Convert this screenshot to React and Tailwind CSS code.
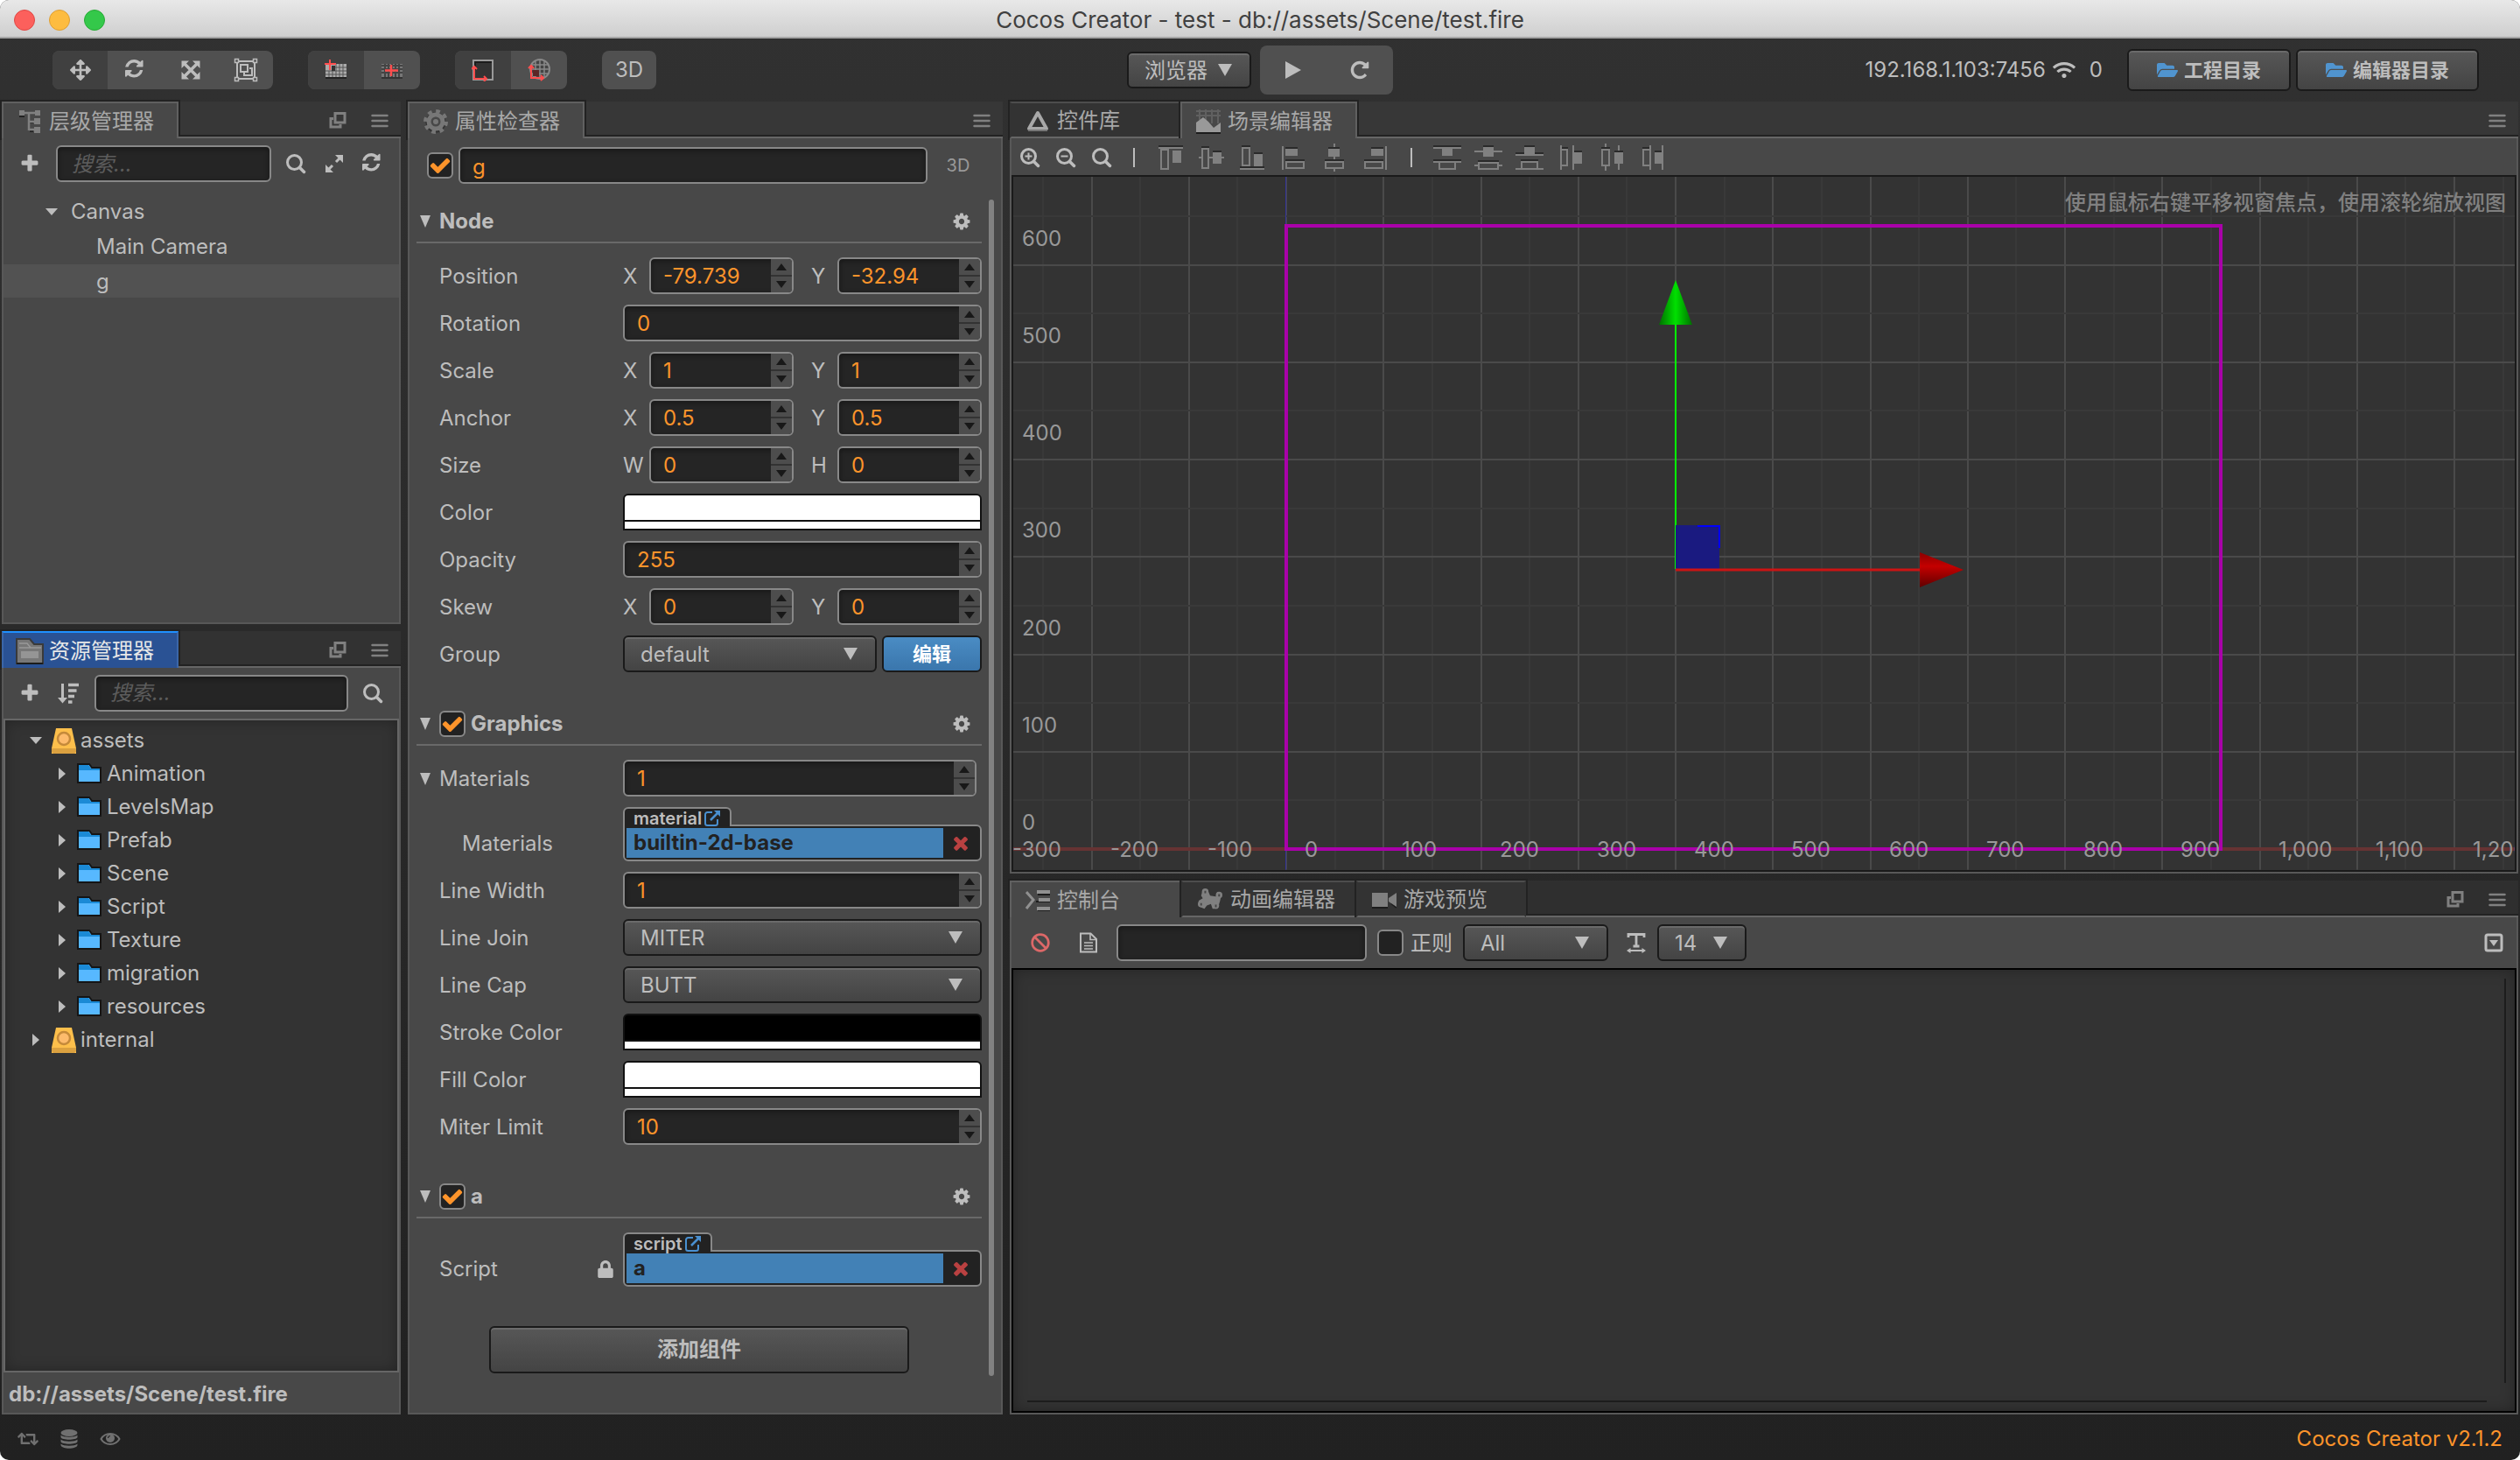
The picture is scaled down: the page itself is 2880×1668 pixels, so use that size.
import React, { useState } from 'react';
import { FaArrowsAlt, FaFolderOpen, FaLock, FaRetweet, FaWifi, FaBan } from 'react-icons/fa';
import clsx from 'clsx';

const paths = {
  refresh:
    'M1511 928q0 5-1 7-64 268-268 434.5t-478 166.5q-146 0-282.5-55t-243.5-157l-129 129q-19 19-45 19t-45-19-19-45v-448q0-26 19-45t45-19h448q26 0 45 19t19 45-19 45l-137 137q71 66 161 102t187 36q134 0 250-65t186-179q11-17 53-117 8-23 30-23h192q13 0 22.5 9.5t9.5 22.5zm25-800v448q0 26-19 45t-45 19h-448q-26 0-45-19t-19-45 19-45l138-138q-148-137-349-137-134 0-250 65t-186 179q-11 17-53 117-8 23-30 23h-199q-13 0-22.5-9.5t-9.5-22.5v-7q65-268 270-434.5t480-166.5q146 0 284 55.5t245 156.5l130-129q19-19 45-19t45 19 19 45z',
  repeat:
    'M1664 256v448q0 26-19 45t-45 19h-448q-42 0-59-40-17-39 14-69l138-138q-148-137-349-137-104 0-198.5 40.5t-163.5 109.5-109.5 163.5-40.5 198.5 40.5 198.5 109.5 163.5 163.5 109.5 198.5 40.5q119 0 225-52t179-147q7-10 23-12 15 0 25 9l137 138q9 8 9.5 20.5t-7.5 22.5q-109 132-264 204.5t-327 72.5q-156 0-298-61t-245-164-164-245-61-298 61-298 164-245 245-164 298-61q147 0 284.5 55.5t244.5 156.5l130-129q29-31 70-14 39 17 39 59z',
  plus:
    'M1600 736v192q0 40-28 68t-68 28h-416v416q0 40-28 68t-68 28h-192q-40 0-68-28t-28-68v-416h-416q-40 0-68-28t-28-68v-192q0-40 28-68t68-28h416v-416q0-40 28-68t68-28h192q40 0 68 28t28 68v416h416q40 0 68 28t28 68z',
  check:
    'M1671 566q0 40-28 68l-724 724-136 136q-28 28-68 28t-68-28l-136-136-362-362q-28-28-28-68t28-68l136-136q28-28 68-28t68 28l294 295 656-657q28-28 68-28t68 28l136 136q28 28 28 68z',
  times:
    'M1490 1322q0 40-28 68l-136 136q-28 28-68 28t-68-28l-294-294-294 294q-28 28-68 28t-68-28l-136-136q-28-28-28-68t28-68l294-294-294-294q-28-28-28-68t28-68l136-136q28-28 68-28t68 28l294 294 294-294q28-28 68-28t68 28l136 136q28 28 28 68t-28 68l-294 294 294 294q28 28 28 68z',
  cog:
    'M1152 896q0-106-75-181t-181-75-181 75-75 181 75 181 181 75 181-75 75-181zm512-109v222q0 12-8 23t-20 13l-185 28q-19 54-39 91 35 50 107 138 10 12 10 25t-9 23q-27 37-99 108t-94 71q-12 0-26-9l-138-108q-44 23-91 38-16 136-29 186-7 28-36 28h-222q-14 0-24.5-8.5t-11.5-21.5l-28-184q-49-16-90-37l-141 107q-10 9-25 9-14 0-25-11-126-114-165-168-7-10-7-23 0-12 8-23 15-21 51-66.5t54-70.5q-27-50-41-99l-183-27q-13-2-21-12.5t-8-23.5v-222q0-12 8-23t19-13l186-28q14-46 39-92-40-57-107-138-10-12-10-24 0-10 9-23 26-36 98.5-107.5t94.5-71.5q13 0 26 10l138 107q44-23 91-38 16-136 29-186 7-28 36-28h222q14 0 24.5 8.5t11.5 21.5l28 184q49 16 90 37l142-107q9-9 24-9 13 0 25 10 129 119 165 170 7 8 7 22 0 12-8 23-15 21-51 66.5t-54 70.5q26 50 41 98l183 28q13 2 21 12.5t8 23.5z',
};

const Glyph = ({ name, className }) => (
  <svg viewBox="0 0 1792 1792" fill="currentColor" className={className} aria-hidden="true">
    <path d={paths[name]} />
  </svg>
);

const Svg = ({ size = 24, className = 'w-6 h-6', children }) => (
  <svg viewBox={`0 0 ${size} ${size}`} fill="none" className={clsx('shrink-0', className)} aria-hidden="true">
    {children}
  </svg>
);

/* ---------- drawn icons ---------- */

const SearchIcon = ({ sign }) => (
  <Svg>
    <circle cx="10.5" cy="10.5" r="8" stroke="currentColor" strokeWidth="3" />
    <path d="M16.5 16.5 21.5 21.5" stroke="currentColor" strokeWidth="3.5" strokeLinecap="round" />
    {sign && <path d={sign === '+' ? 'M10.500 6.500v8M6.500 10.500h8' : 'M6.500 10.500h8'} stroke="currentColor" strokeWidth="2" />}
  </Svg>
);

const ExpandIcon = () => (
  <Svg>
    <path d="M14 10 20 4M4 20l6-6" stroke="currentColor" strokeWidth="3" />
    <path d="M13 2h9v9zM11 22H2v-9z" fill="currentColor" />
  </Svg>
);

const SortIcon = () => (
  <Svg>
    <path d="M5.500 1v19" stroke="currentColor" strokeWidth="3" />
    <path d="M0 17h11l-5.500 6.500z" fill="currentColor" />
    <path d="M12 2.500h12M12 9h9.500M12 15.500h7M12 22h4.500" stroke="currentColor" strokeWidth="3.500" />
  </Svg>
);

const RestoreIcon = () => (
  <Svg size={20} className="w-5 h-5">
    <path d="M7 1.500h11V12H7z" stroke="currentColor" strokeWidth="3" />
    <path d="M5 7.500H2V17h11v-3" stroke="currentColor" strokeWidth="3" />
  </Svg>
);

const MenuIcon = () => (
  <Svg size={20} className="w-5 h-5">
    <path d="M1.500 4h17M1.500 10h17M1.500 16h17" stroke="currentColor" strokeWidth="2.500" strokeLinecap="round" />
  </Svg>
);

const ScaleIcon = () => (
  <Svg>
    <path d="M5 5 19 19M19 5 5 19" stroke="currentColor" strokeWidth="3.500" />
    <path d="M1.500 1.500h8.500L1.500 10zM22.500 1.500v8.500L14 1.500zM1.500 22.500V14l8.500 8.500zM22.500 22.500H14l8.500-8.500z" fill="currentColor" />
  </Svg>
);

const RectToolIcon = () => (
  <Svg size={28} className="w-7 h-7">
    <path d="M4 4h20v20H4z" stroke="currentColor" strokeWidth="2" />
    <path d="M8 8h8v8H8z" stroke="currentColor" strokeWidth="2" />
    <path d="M18 12h3v8h-9v-3" stroke="currentColor" strokeWidth="2" />
    <path d="M1.500 1.500h4v4h-4zM22.500 1.500h4v4h-4zM1.500 22.500h4v4h-4zM22.500 22.500h4v4h-4z" fill="#505050" stroke="currentColor" strokeWidth="1.500" />
  </Svg>
);

const AnchorIcon = () => (
  <Svg size={26} className="w-[26px] h-[26px]">
    <rect x="1" y="6" width="24" height="15" fill="#aaa" />
    <path d="M12 10h13M1 14h24M1 18h24M5 14v7M9 14v7M13 6v15M17 6v15M21 6v15" stroke="#555" />
    <rect x="1" y="21" width="24" height="2" fill="#222" />
    <path d="M8 8h4v6H8z" fill="#333" />
    <path d="M6 1v12M0 6h13" stroke="#ff4d4d" strokeWidth="2" />
  </Svg>
);

const CenterIcon = () => (
  <Svg size={26} className="w-[26px] h-[26px]">
    <rect x="1" y="6" width="24" height="15" fill="#777" />
    <path d="M1 8h24M1 12h24M1 16h24M5 6v15M9 6v15M13 6v15M17 6v15M21 6v15" stroke="#444" strokeWidth="2" />
    <rect x="1" y="21" width="24" height="2" fill="#333" />
    <path d="M12 7v13M5 13.500h15" stroke="#ff4d4d" strokeWidth="2.500" />
  </Svg>
);

const LocalIcon = () => (
  <Svg size={26} className="w-[26px] h-[26px]">
    <rect x="2" y="2" width="22" height="22" fill="#333" stroke="#999" strokeWidth="2" />
    <path d="M3 4h20M4 4v9" stroke="#1c1c1c" strokeWidth="2" />
    <path d="M3 10v13h13M0 12l3-3 3 3M14 20l3 3-3 3" stroke="#ff4d4d" strokeWidth="2" />
  </Svg>
);

const GlobeIcon = () => (
  <Svg size={26} className="w-[26px] h-[26px]">
    <circle cx="14" cy="12" r="11" fill="#444" stroke="#888" strokeWidth="2" />
    <path d="M14 1v22M9 2v20M19 2v20M3 12h22M5 7h19M5 17h19" stroke="#888" strokeWidth="1.500" />
    <path d="M6 20v-7h7v7z" fill="#5a2626" />
    <path d="M4 9v13h13M1 11l3-3 3 3M15 19l3 3-3 3" stroke="#ff4d4d" strokeWidth="2" />
  </Svg>
);

const ExternalIcon = () => (
  <Svg size={20} className="w-5 h-5 text-[#4a90d0]">
    <path d="M10 3H4.500A2.500 2.500 0 0 0 2 5.500v10A2.500 2.500 0 0 0 4.500 18h9a2.500 2.500 0 0 0 2.500-2.500V11" stroke="currentColor" strokeWidth="2" />
    <path d="M8 12 16 4" stroke="currentColor" strokeWidth="2.500" />
    <path d="M12 1h7v7z" fill="currentColor" />
  </Svg>
);

const DatabaseIcon = () => (
  <Svg size={22} className="w-[22px] h-[22px]">
    <g fill="currentColor">
      <ellipse cx="11" cy="4" rx="9.500" ry="4" />
      <path d="M1.500 6.500c3 3 16 3 19 0V9c-1 3.600-18 3.600-19 0z" />
      <path d="M1.500 11.500c3 3 16 3 19 0V14c-1 3.600-18 3.600-19 0z" />
      <path d="M1.500 16.500c3 3 16 3 19 0V18c-1 5-18 5-19 0z" />
    </g>
  </Svg>
);

const EyeIcon = () => (
  <Svg>
    <path d="M1.500 12C6 4 18 4 22.500 12 18 20 6 20 1.500 12z" stroke="currentColor" strokeWidth="2" />
    <circle cx="12" cy="11" r="5" fill="currentColor" />
    <path d="M9.500 11a2.500 2.500 0 0 1 2.500-2.500" stroke="#222" strokeWidth="1.200" />
  </Svg>
);

const DocIcon = () => (
  <Svg>
    <path d="M3 1.500h11.500L21 8v14.500H3z" stroke="currentColor" strokeWidth="2" />
    <path d="M14 1.500V8.500h7M7 12h10M7 15.500h10M7 19h10" stroke="currentColor" strokeWidth="1.600" />
  </Svg>
);

const TextWidthIcon = () => (
  <Svg>
    <path d="M3 6V2.500h18V6M12 2.500V16M8.500 16h7" stroke="currentColor" strokeWidth="2.800" />
    <path d="M4 21h16" stroke="currentColor" strokeWidth="2" />
    <path d="M1 21l4.500-3v6zM23 21l-4.500-3v6z" fill="currentColor" />
  </Svg>
);

const CollapseIcon = () => (
  <Svg>
    <rect x="3" y="3" width="18" height="18" rx="2" stroke="currentColor" strokeWidth="3" />
    <path d="M7 9h10l-5 7z" fill="currentColor" />
  </Svg>
);

const TreeTabIcon = () => (
  <Svg size={28} className="w-7 h-7">
    <path d="M2 8h6M14 15h4M14 25h4" stroke="#222" strokeWidth="2" />
    <path d="M2 4h24M13 4v20M13 14h6M13 23h6" stroke="#808080" strokeWidth="2.500" />
    <path d="M2 1h6v6H2zM20 1h6v6h-6zM19 10h7v7h-7zM19 20h7v7h-7z" fill="#808080" />
  </Svg>
);

const FolderTabIcon = () => (
  <Svg size={32} className="w-8 h-8 -mx-0.5">
    <path d="M1 2h15l5 6h10v22H1z" fill="#777" stroke="#3a3a3a" strokeWidth="2" />
    <path d="M4 7h9l4 5h12M4 12h25" stroke="#999" strokeWidth="1.500" />
    <path d="M6 16h20v8H6z" fill="#959595" />
    <path d="M1 30h30" stroke="#1c1c1c" strokeWidth="2" />
  </Svg>
);

const GearTabIcon = () => (
  <Svg size={28} className="w-7 h-7">
    <circle cx="14" cy="15" r="9" stroke="#333" strokeWidth="5" />
    <circle cx="14" cy="14" r="12" stroke="#777" strokeWidth="4" strokeDasharray="4.700 4.700" />
    <circle cx="14" cy="14" r="8" stroke="#777" strokeWidth="5" />
    <circle cx="14" cy="14" r="3" fill="#777" />
  </Svg>
);

const WidgetTabIcon = () => (
  <Svg size={28} className="w-7 h-7">
    <path d="M14 5 24 23H4z" stroke="#a8a8a8" strokeWidth="4" strokeLinejoin="round" />
    <path d="M3 25h22" stroke="#777" strokeWidth="2" />
  </Svg>
);

const SceneTabIcon = () => (
  <Svg size={28} className="w-7 h-7">
    <path d="M0 2h28M0 7h28M4 0v12M11 0v12M18 0v16M25 0v16" stroke="#606060" strokeWidth="2" />
    <path d="M0 15 8 9l6 5 6 7 8-6v11H0z" fill="#999" />
    <path d="M0 27h28" stroke="#1c1c1c" strokeWidth="2" />
  </Svg>
);

const ConsoleTabIcon = () => (
  <Svg size={28} className="w-7 h-7">
    <path d="M14 7h14M12 15h16M14 25h14" stroke="#1c1c1c" strokeWidth="2" />
    <path d="M13 4h15M15 13h13M13 23h15" stroke="#909090" strokeWidth="4" />
    <path d="M1 4l8 9-8 10" stroke="#909090" strokeWidth="3" />
  </Svg>
);

const AnimTabIcon = () => (
  <Svg size={30} className="w-[30px] h-7">
    <path d="M4 10 6 3l6 0 3 7 7 1 2-6 5 3-2 9-3 9-6 0-2-6-5 2-3 4-7-3 0-7 5-3z" fill="#808080" />
    <circle cx="9" cy="5" r="4" fill="#808080" />
    <circle cx="26" cy="9" r="4" fill="#808080" />
    <circle cx="4" cy="20" r="4" fill="#808080" />
    <circle cx="22" cy="22" r="4" fill="#808080" />
    <path d="M9 4v3M26 8v3M4 19v3M22 21v3" stroke="#444" strokeWidth="2" />
  </Svg>
);

const VideoTabIcon = () => (
  <Svg size={28} className="w-7 h-7">
    <path d="M0 23h18M22 18l6 5" stroke="#1c1c1c" strokeWidth="2" />
    <path d="M0 6h18v16H0zM19 12l9-6v16l-9-6z" fill="#808080" />
  </Svg>
);

const DbIcon = () => (
  <Svg size={30} className="w-[30px] h-[30px]">
    <path d="M6 1h18l5 23v6H1v-6z" fill="#fdbf4b" />
    <path d="M1 24h28v4l-2 2H3l-2-2z" fill="#dba140" />
    <circle cx="15" cy="13" r="7" fill="#fdbb6c" stroke="#c58a3a" strokeWidth="2.500" />
  </Svg>
);

const FolderIcon = () => (
  <Svg size={28} className="w-7 h-7">
    <path d="M1 3h13l3 4h10v17H1z" fill="#57b8ff" stroke="#151515" strokeWidth="2" />
    <path d="M2 4h11l3 4h10v2H2z" fill="#1b8ad6" />
  </Svg>
);

const Caret = ({ open, className }) => (
  <Svg size={14} className={clsx('w-3.5 h-3.5', className)}>
    <path d={open ? 'M0 3h14l-7 8z' : 'M3 0l8 7-8 7z'} fill="currentColor" />
  </Svg>
);

const Triangle = ({ className }) => (
  <svg viewBox="0 0 16 14" preserveAspectRatio="none" className={className} aria-hidden="true">
    <path d="M0 0h16L8 14z" fill="currentColor" />
  </svg>
);

/* each entry: light shapes + their dark shadow line, drawn on a 32px grid */
const alignIcons = [
  { name: 'align top', light: 'M3 4h28v2H3zM5 6h10v24H5zm2 2v20h6V8zM19 8h10v14H19z', dark: 'M3 2h28v2H3z' },
  { name: 'align middle', light: 'M2 15h3v2H2zM14 15h4v2h-4zM28 15h3v2h-3zM5 5h9v24H5zm2 2v20h5V7zM18 10h10v13H18z', dark: 'M5 3h9v2H5zM18 8h10v2H18z' },
  { name: 'align bottom', light: 'M2 28h28v2H2zM4 4h10v22H4zm2 2v18h6V6zM18 12h10v14H18z', dark: 'M4 2h10v2H4zM18 10h10v2H18zM2 26h28v2H2z' },
  { name: 'align left', light: 'M3 3h2v27H3zM7 6h14v8H7zM7 20h22v9H7zm2 2v5h18v-5z', dark: 'M7 4h14v2H7zM7 18h22v2H7z' },
  { name: 'align center', light: 'M15 0h2v4h-2zM15 15h2v3h-2zM15 29h2v3h-2zM9 6h13v9H9zM5 20h22v9H5zm2 2v5h18v-5z', dark: 'M9 4h13v2H9zM5 18h22v2H5z' },
  { name: 'align right', light: 'M27 3h2v27h-2zM11 6h14v8H11zM3 20h22v9H3zm2 2v5h18v-5z', dark: 'M11 4h14v2H11zM3 18h22v2H3z' },
];

const distributeIcons = [
  { name: 'distribute top', light: 'M0 4h32v2H0zM10 6h12v8H10zM0 20h32v2H0zM6 22h20v8H6zm2 0v6h16v-6z', dark: 'M0 2h32v2H0zM0 18h32v2H0z' },
  { name: 'distribute middle', light: 'M0 8h10v2H0zM22 8h10v2H22zM10 4h12v11H10zM0 24h4v2H0zM28 24h4v2h-4zM4 21h24v9H4zm2 2v5h20v-5z', dark: 'M10 2h12v2H10zM4 19h24v2H4z' },
  { name: 'distribute bottom', light: 'M0 12h10v2H0zM22 12h10v2H22zM10 4h12v10H10zM0 28h6v2H0zM26 28h6v2h-6zM6 20h20v10H6zm2 2v6h16v-6z', dark: 'M10 2h12v2H10zM0 10h10v2H0zM22 10h10v2H22zM6 18h20v2H6z' },
  { name: 'distribute left', light: 'M4 2h2v28H4zM6 6h7v20H6zm0 2v16h5V8zM18 2h2v28h-2zM20 10h9v13h-9z', dark: 'M6 4h7v2H6zM20 8h9v2h-9z' },
  { name: 'distribute center', light: 'M8 0h2v4H8zM8 26h2v5H8zM4 6h10v20H4zm2 2v16h6V8zM23 2h2v6h-2zM23 23h2v7h-2zM19 10h10v13H19z', dark: 'M4 4h10v2H4zM19 8h10v2H19z' },
  { name: 'distribute right', light: 'M12 2h2v28h-2zM4 6h8v20H4zm2 2v16h6V8zM26 2h2v28h-2zM18 10h8v13h-8z', dark: 'M4 4h8v2H4zM18 8h8v2h-8z' },
];

/* ---------- shared controls ---------- */

const fieldBox =
  'h-[42px] min-w-0 rounded-md border-2 border-[#888] bg-[#252525] shadow-[inset_0_2px_6px_rgba(0,0,0,0.4)]';
const raised =
  'rounded-md border-2 border-[#1a1a1a] bg-linear-to-b from-[#575757] to-[#444] shadow-[inset_0_2px_0_rgba(255,255,255,0.12)]';

const Checkbox = ({ label, checked = true }) => {
  const [on, setOn] = useState(checked);
  return (
    <label className="relative flex w-[30px] h-[30px] shrink-0 items-center justify-center rounded-md border-2 border-[#888] bg-[#222]">
      <input
        type="checkbox"
        aria-label={label}
        checked={on}
        onChange={(e) => setOn(e.target.checked)}
        className="absolute inset-0 appearance-none"
      />
      {on && <Glyph name="check" className="w-[26px] h-[26px] text-[#fd942b]" />}
    </label>
  );
};

const NumberField = ({ id, label, value, className }) => (
  <div className={clsx('flex flex-1 overflow-hidden', fieldBox, className)}>
    <input
      id={id}
      aria-label={label}
      defaultValue={value}
      className="w-0 min-w-0 flex-1 bg-transparent pl-3.5 pt-0.5 text-[#fd942b] outline-none"
    />
    <div className="flex w-6 shrink-0 flex-col bg-[#4d4d4d] text-[#181818]">
      <button aria-label="Increase" className="flex flex-1 items-center justify-center border-b-2 border-[#333]">
        <Triangle className="w-3 h-2 rotate-180" />
      </button>
      <button aria-label="Decrease" className="flex flex-1 items-center justify-center">
        <Triangle className="w-3 h-2" />
      </button>
    </div>
  </div>
);

const Select = ({ id, label, value, className }) => (
  <div className={clsx('relative', className)}>
    <select
      id={id}
      aria-label={label}
      className={clsx('h-[42px] w-full appearance-none pl-[18px] pt-0.5 text-[#bdbdbd] outline-none', raised)}
    >
      <option>{value}</option>
    </select>
    <Triangle className="pointer-events-none absolute right-[22px] top-3.5 w-4 h-3.5 text-[#bdbdbd]" />
  </div>
);

const ColorField = ({ label, color }) => (
  <button
    aria-label={label}
    className="flex h-[42px] flex-1 flex-col overflow-hidden rounded-t-md border-2 border-[#111] bg-[#111]"
  >
    <span className={clsx('mb-0.5 w-full flex-1', color)} />
    <span className="h-2 w-full bg-white" />
  </button>
);

const AssetField = ({ label, type, value }) => (
  <div className="flex min-w-0 flex-1 flex-col items-start">
    <div className="relative -mb-0.5 flex h-[22px] items-center gap-0.5 rounded-t-md border-2 border-b-0 border-[#888] bg-[#222] px-2.5 pt-0.5 text-xl font-semibold leading-none">
      {type}
      <ExternalIcon />
    </div>
    <div className="flex h-[42px] w-full items-center rounded-md rounded-tl-none border-2 border-[#888] bg-[#222] p-0.5">
      <button
        aria-label={label}
        className="h-full flex-1 bg-[#4281b6] px-2 text-left font-bold leading-none text-[#222]"
      >
        {value}
      </button>
      <button aria-label={`Clear ${label}`} className="flex w-10 justify-center">
        <Glyph name="times" className="w-6 h-6 text-[#b94141]" />
      </button>
    </div>
  </div>
);

const Row = ({ label, id, nested, fold, lock, children }) => (
  <div className="flex items-end">
    <div className="flex h-[42px] w-[236px] shrink-0 items-center pt-0.5">
      <span className="flex w-[26px] shrink-0 pl-1">
        {fold && <Triangle className="w-3 h-3.5" />}
      </span>
      <label htmlFor={id} className={clsx('flex-1', nested && 'pl-[26px]')}>
        {label}
      </label>
      {lock && <FaLock className="mr-2.5 text-[20px]" />}
    </div>
    {children}
  </div>
);

const Pair = ({ name, axes = ['X', 'Y'], values }) => (
  <div className="flex min-w-0 flex-1 gap-5">
    {axes.map((axis, i) => (
      <label key={axis} className="flex min-w-0 flex-1 items-center">
        <span className="w-[30px] shrink-0 pt-0.5">{axis}</span>
        <NumberField label={`${name} ${axis}`} value={values[i]} />
      </label>
    ))}
  </div>
);

const Section = ({ title, toggle, children, className }) => (
  <section className={className}>
    <div className="flex h-[50px] items-center border-b-2 border-[#696969] pt-0.5">
      <span className="flex w-[26px] pl-1">
        <Triangle className="w-3 h-3.5" />
      </span>
      {toggle && (
        <div className="mr-1.5">
          <Checkbox label={title} />
        </div>
      )}
      <h2 className="flex-1 font-bold">{title}</h2>
      <button aria-label={`${title} settings`} className="mr-3">
        <Glyph name="cog" className="w-[22px] h-[22px]" />
      </button>
    </div>
    <div className="mt-4 flex flex-col gap-3">{children}</div>
  </section>
);

/* ---------- panel frame with its tabs ---------- */

const tabTone = {
  active: 'border-[#606060] bg-[#484848] text-[#a8a8a8]',
  idle: 'border-[#4d4d4d] bg-[#333] text-[#a8a8a8]',
  focused: 'border-t-[#1e90ff] border-x-[#3b66a8] bg-[#2a5294] text-[#e8e8e8]',
};

const Panel = ({ tabs, strip, detach, className, children }) => (
  <section className={clsx('flex min-h-0 flex-col', className)}>
    <header className={clsx('flex h-[42px] shrink-0', strip)}>
      {tabs.map(({ icon: Icon, title, tone, width }) => (
        <button
          key={title}
          className={clsx(
            'flex items-center gap-2 border-x-2 border-t-2 pl-4 pt-0.5 leading-none outline-2 outline-[#222]',
            width,
            tabTone[tone],
            tone === 'idle' && 'border-b-2 border-x-transparent border-b-[#666]'
          )}
        >
          <Icon />
          {title}
        </button>
      ))}
      <div className="flex flex-1 items-center justify-end gap-7 border-b-2 border-[#666] pr-3.5 pt-1 text-[#808080] shadow-[inset_0_-2px_0_#222]">
        {detach && (
          <button aria-label="Detach panel">
            <RestoreIcon />
          </button>
        )}
        <button aria-label="Panel menu">
          <MenuIcon />
        </button>
      </div>
    </header>
    <div className="flex min-h-0 flex-1 flex-col border-2 border-t-0 border-[#585858] bg-[#484848]">{children}</div>
  </section>
);

const ToolGroup = ({ items, width }) => (
  <div className={clsx('flex h-11 overflow-hidden rounded-lg bg-[#505050]', width)}>
    {items.map(([label, icon], i) => (
      <button
        key={label}
        aria-label={label}
        className={clsx('flex flex-1 items-center justify-center', i === 0 && 'bg-[#404040]')}
      >
        {icon}
      </button>
    ))}
  </div>
);

const TopBar = () => (
  <div className="grid h-[72px] shrink-0 grid-cols-[1fr_auto_1fr] items-center px-[47px]">
    <div className="flex gap-10 pl-[13px]">
      <ToolGroup
        width="w-[252px]"
        items={[
          ['Move', <FaArrowsAlt className="w-6 h-6" />],
          ['Rotate', <Glyph name="refresh" className="w-6 h-6" />],
          ['Scale', <ScaleIcon />],
          ['Rect', <RectToolIcon />],
        ]}
      />
      <ToolGroup
        width="w-32"
        items={[
          ['Anchor', <AnchorIcon />],
          ['Center', <CenterIcon />],
        ]}
      />
      <ToolGroup
        width="w-32"
        items={[
          ['Local', <LocalIcon />],
          ['Global', <GlobeIcon />],
        ]}
      />
      <button className="h-11 w-[62px] rounded-lg bg-[#505050]">3D</button>
    </div>
    <div className="flex items-center gap-2.5">
      <Select label="Preview platform" value="浏览器" className="w-[142px]" />
      <div className="flex h-14 w-[152px] items-center rounded-lg bg-[#505050]">
        <button aria-label="Play" className="flex flex-1 justify-center">
          <Svg size={22} className="w-[22px] h-[22px]">
            <path d="M2 1v20l18-10z" fill="currentColor" />
          </Svg>
        </button>
        <button aria-label="Reload" className="flex flex-1 justify-center">
          <Glyph name="repeat" className="w-6 h-6" />
        </button>
      </div>
    </div>
    <div className="flex items-center justify-end">
      <span>192.168.1.103:7456</span>
      <FaWifi className="ml-2 w-[26px] h-6" />
      <span className="ml-4 mr-7">0</span>
      <div className="flex gap-1.5">
        {['工程目录', '编辑器目录'].map((text) => (
          <button
            key={text}
            className={clsx('flex h-12 items-center gap-[7px] px-8 text-[22px] font-semibold leading-none', raised)}
          >
            <FaFolderOpen className="w-6 h-6 text-[#5094cf]" />
            {text}
          </button>
        ))}
      </div>
    </div>
  </div>
);

const Hierarchy = () => (
  <Panel
    className="flex-[2]"
    strip="bg-[#373737]"
    detach
    tabs={[{ icon: TreeTabIcon, title: '层级管理器', tone: 'active', width: 'w-[202px]' }]}
  >
    <div className="flex items-center px-[18px] pt-2">
      <button aria-label="Add node" className="mr-[18px]">
        <Glyph name="plus" className="w-6 h-6" />
      </button>
      <input
        aria-label="搜索"
        placeholder="搜索..."
        className={clsx('flex-1 px-4 placeholder:italic placeholder:text-[#5c5c5c]', fieldBox)}
      />
      <div className="ml-4 flex gap-5">
        <button aria-label="Search"><SearchIcon /></button>
        <button aria-label="Expand"><ExpandIcon /></button>
        <button aria-label="Refresh"><Glyph name="refresh" className="w-6 h-6" /></button>
      </div>
    </div>
    <ul className="mt-3.5 flex flex-col gap-0.5">
      <li className="flex h-[38px] items-center gap-[15px] pl-12 pt-0.5">
        <Caret open />
        Canvas
      </li>
      <li className="flex h-[38px] items-center pl-[106px] pt-0.5">Main Camera</li>
      <li className="flex h-[38px] items-center bg-[#525252] pl-[106px] pt-0.5">g</li>
    </ul>
  </Panel>
);

const folders = ['Animation', 'LevelsMap', 'Prefab', 'Scene', 'Script', 'Texture', 'migration', 'resources'];

const Assets = () => (
  <Panel
    className="flex-[3]"
    strip="bg-[#323232]"
    detach
    tabs={[{ icon: FolderTabIcon, title: '资源管理器', tone: 'focused', width: 'w-[202px]' }]}
  >
    <div className="flex items-center px-[18px] py-2">
      <button aria-label="Add asset" className="mr-5">
        <Glyph name="plus" className="w-6 h-6" />
      </button>
      <button aria-label="Sort" className="mr-[18px]">
        <SortIcon />
      </button>
      <input
        aria-label="搜索"
        placeholder="搜索..."
        className={clsx('flex-1 px-4 placeholder:italic placeholder:text-[#5c5c5c]', fieldBox)}
      />
      <button aria-label="Search" className="ml-4">
        <SearchIcon />
      </button>
    </div>
    <ul className="flex-1 border-2 border-[#666] bg-[#333] pt-1 shadow-[inset_0_0_16px_rgba(0,0,0,0.3)]">
      <li className="flex h-[38px] items-center pl-7">
        <Caret open className="mr-2.5" />
        <DbIcon />
        <span className="pl-1">assets</span>
      </li>
      {folders.map((name) => (
        <li key={name} className="flex h-[38px] items-center pl-[58px]">
          <Caret className="mr-2.5" />
          <FolderIcon />
          <span className="pl-1.5">{name}</span>
        </li>
      ))}
      <li className="flex h-[38px] items-center pl-7">
        <Caret className="mr-2.5" />
        <DbIcon />
        <span className="pl-1">internal</span>
      </li>
    </ul>
    <p className="flex h-[46px] shrink-0 items-center pl-1.5 pt-1 font-bold">db://assets/Scene/test.fire</p>
  </Panel>
);

const Inspector = () => (
  <Panel
    className="w-[680px] shrink-0"
    strip="bg-[#373737]"
    tabs={[{ icon: GearTabIcon, title: '属性检查器', tone: 'active', width: 'w-[202px]' }]}
  >
    <div className="flex items-center gap-1.5 pb-[18px] pl-5 pt-2.5">
      <Checkbox label="Node active" />
      <input aria-label="Node name" defaultValue="g" className={clsx('flex-1 px-3.5 pt-0.5 text-[#fd942b]', fieldBox)} />
      <button className="mr-5 w-[58px] text-xl text-[#999]">3D</button>
    </div>
    <div className="flex min-h-0 flex-1 gap-2 px-2 pb-[42px]">
      <div className="min-w-0 flex-1">
        <Section title="Node">
          <Row label="Position"><Pair name="Position" values={['-79.739', '-32.94']} /></Row>
          <Row label="Rotation" id="rotation"><NumberField id="rotation" value="0" /></Row>
          <Row label="Scale"><Pair name="Scale" values={['1', '1']} /></Row>
          <Row label="Anchor"><Pair name="Anchor" values={['0.5', '0.5']} /></Row>
          <Row label="Size"><Pair name="Size" axes={['W', 'H']} values={['0', '0']} /></Row>
          <Row label="Color"><ColorField label="Color" color="bg-white" /></Row>
          <Row label="Opacity" id="opacity"><NumberField id="opacity" value="255" /></Row>
          <Row label="Skew"><Pair name="Skew" values={['0', '0']} /></Row>
          <Row label="Group" id="group">
            <Select id="group" value="default" className="flex-1" />
            <button className="ml-1.5 h-[42px] w-[114px] rounded-md border-2 border-[#1a1a1a] bg-linear-to-b from-[#4a8cc4] to-[#3a76ac] text-[22px] font-semibold leading-none text-white">
              编辑
            </button>
          </Row>
        </Section>

        <Section title="Graphics" toggle className="mt-[34px]">
          <Row label="Materials" id="materials" fold>
            <NumberField id="materials" value="1" className="mr-1.5" />
          </Row>
          <Row label="Materials" nested>
            <AssetField label="Material asset" type="material" value="builtin-2d-base" />
          </Row>
          <Row label="Line Width" id="line-width"><NumberField id="line-width" value="1" /></Row>
          <Row label="Line Join" id="line-join"><Select id="line-join" value="MITER" className="flex-1" /></Row>
          <Row label="Line Cap" id="line-cap"><Select id="line-cap" value="BUTT" className="flex-1" /></Row>
          <Row label="Stroke Color"><ColorField label="Stroke Color" color="bg-black" /></Row>
          <Row label="Fill Color"><ColorField label="Fill Color" color="bg-white" /></Row>
          <Row label="Miter Limit" id="miter"><NumberField id="miter" value="10" /></Row>
        </Section>

        <Section title="a" toggle className="mt-[34px]">
          <Row label="Script" lock>
            <AssetField label="Script asset" type="script" value="a" />
          </Row>
        </Section>

        <button className={clsx('mx-auto mt-[45px] block h-[54px] w-[480px] font-semibold leading-none', raised)}>
          添加组件
        </button>
      </div>
      <div className="w-1.5 rounded-full bg-[#828282]" />
    </div>
  </Panel>
);

/* ---------- scene view ---------- */

const ORIGIN = { x: 312, y: 768 };
const UNIT = 1.1125;
const sx = (v) => Math.round(ORIGIN.x + v * UNIT);
const sy = (v) => Math.round(ORIGIN.y - v * UNIT);

const range = (from, to, step) => {
  const out = [];
  for (let v = from; v <= to; v += step) out.push(v);
  return out;
};

const SceneCanvas = () => (
  <svg className="absolute inset-0 h-full w-full" role="img" aria-label="Scene">
    <defs>
      <linearGradient id="coneY">
        <stop offset="0" stopColor="#007000" />
        <stop offset="0.5" stopColor="#00e000" />
        <stop offset="1" stopColor="#007000" />
      </linearGradient>
      <linearGradient id="coneX" x2="0" y2="1">
        <stop offset="0" stopColor="#8a0000" />
        <stop offset="0.4" stopColor="#c40000" />
        <stop offset="1" stopColor="#600000" />
      </linearGradient>
    </defs>
    {range(-250, 1350, 50).map((v) => (
      <rect key={v} x={sx(v) - 1} y="0" width="2" height="100%" fill={v % 100 ? '#393939' : '#4a4a4a'} />
    ))}
    {range(-50, 650, 50).map((v) => (
      <rect key={v} x="0" y={sy(v) - 1} width="100%" height="2" fill={v % 100 ? '#393939' : '#4a4a4a'} />
    ))}
    <rect x="0" y={sy(0) - 2} width="100%" height="4" fill="#663333" />
    <rect x={sx(0) - 1} y="0" width="1" height="100%" fill="#333399" />
    <rect x={sx(0)} y={sy(640)} width={sx(960) - sx(0)} height={sy(0) - sy(640)} stroke="#aa00aa" strokeWidth="4" fill="none" />

    <path d="M757 448V168" stroke="#00ff00" strokeWidth="2" />
    <path d="M738 169h38L757 118z" fill="url(#coneY)" />
    <rect x="757" y="398" width="50" height="50" fill="#1a1a80" />
    <path d="M782 399h25v25" stroke="#0000ff" strokeWidth="2" fill="none" />
    <path d="M757 449h280" stroke="#cc1414" strokeWidth="3" />
    <path d="M1036 429v40l50-20z" fill="url(#coneX)" />

    <g fill="#999" className="text-2xl">
      {range(0, 600, 100).map((v) => (
        <text key={v} x="10" y={sy(v) - 22}>{v}</text>
      ))}
      {range(-300, 1200, 100).map((v) => (
        <text key={v} x={sx(v) + 21} y={sy(0) + 9}>{v.toLocaleString('en-US')}</text>
      ))}
    </g>
  </svg>
);

const AlignButtons = ({ icons }) => (
  <div className="flex gap-[15px]">
    {icons.map(({ name, light, dark }) => (
      <button key={name} aria-label={name}>
        <Svg size={32} className="w-8 h-8">
          <path d={light} fill="#808080" fillRule="evenodd" />
          <path d={dark} fill="#2a2a2a" />
        </Svg>
      </button>
    ))}
  </div>
);

const SceneEditor = () => (
  <Panel
    className="flex-[13]"
    strip="bg-[#373737]"
    tabs={[
      { icon: WidgetTabIcon, title: '控件库', tone: 'idle', width: 'w-[195px]' },
      { icon: SceneTabIcon, title: '场景编辑器', tone: 'active', width: 'w-[202px]' },
    ]}
  >
    <div className="flex h-[42px] shrink-0 items-center pl-[9px] pt-0.5">
      <div className="flex gap-[17px]">
        <button aria-label="Zoom in"><SearchIcon sign="+" /></button>
        <button aria-label="Zoom out"><SearchIcon sign="-" /></button>
        <button aria-label="Zoom reset"><SearchIcon /></button>
      </div>
      <span className="ml-6 mr-6 h-[22px] w-0.5 bg-[#bdbdbd]" />
      <AlignButtons icons={alignIcons} />
      <span className="ml-6 mr-6 h-[22px] w-0.5 bg-[#bdbdbd]" />
      <AlignButtons icons={distributeIcons} />
    </div>
    <div className="relative flex-1 overflow-hidden border-2 border-[#1a1a1a] bg-[#333]">
      <SceneCanvas />
      <p className="absolute right-2.5 top-3.5 font-medium text-[#808080]">使用鼠标右键平移视窗焦点，使用滚轮缩放视图</p>
    </div>
  </Panel>
);

const Console = () => (
  <Panel
    className="flex-[9]"
    strip="bg-[#2f2f2f]"
    detach
    tabs={[
      { icon: ConsoleTabIcon, title: '控制台', tone: 'active', width: 'w-[196px]' },
      { icon: AnimTabIcon, title: '动画编辑器', tone: 'idle', width: 'w-[200px]' },
      { icon: VideoTabIcon, title: '游戏预览', tone: 'idle', width: 'w-[194px]' },
    ]}
  >
    <div className="flex h-[58px] shrink-0 items-center pl-[22px] pr-3.5">
      <button aria-label="Clear"><FaBan className="w-[22px] h-[22px] text-[#dc6868]" /></button>
      <button aria-label="Open log" className="ml-8 mr-5"><DocIcon /></button>
      <input aria-label="Filter" className={clsx('w-[286px] px-4', fieldBox)} />
      <div className="mx-3 flex items-center gap-2">
        <Checkbox label="正则" checked={false} />
        <span className="pt-0.5">正则</span>
      </div>
      <Select label="Log level" value="All" className="w-[166px]" />
      <span className="ml-5 mr-3"><TextWidthIcon /></span>
      <Select label="Font size" value="14" className="w-[102px]" />
      <button aria-label="Collapse" className="ml-auto"><CollapseIcon /></button>
    </div>
    <div className="flex min-h-0 flex-1 flex-col border-2 border-black bg-[#333] shadow-[inset_0_0_16px_rgba(0,0,0,0.3)]">
      <div className="mb-5 ml-4 mr-2.5 mt-2.5 flex-1 border-r-2 border-[#1c1c1c]" />
      <div className="mb-2.5 ml-4 mr-8 border-b-2 border-[#1c1c1c]" />
    </div>
  </Panel>
);

const App = () => (
  <div className="h-screen bg-white">
    <div className="flex h-full flex-col overflow-hidden rounded-[10px] bg-linear-to-b from-[#313131] to-[#212121] font-[Inter,'Noto_Sans_CJK_SC',sans-serif] text-2xl text-[#bdbdbd]">
      <div className="relative flex h-11 shrink-0 items-center border-b-2 border-[#a5a5a5] bg-linear-to-b from-[#e8e8e8] to-[#cfcfcf] pt-1">
        <div className="absolute left-4 flex gap-4">
          <button aria-label="Close" className="w-6 h-6 rounded-full border border-[#df4744] bg-[#fc605c]" />
          <button aria-label="Minimize" className="w-6 h-6 rounded-full border border-[#de9f34] bg-[#fdbc40]" />
          <button aria-label="Zoom" className="w-6 h-6 rounded-full border border-[#27aa35] bg-[#34c84a]" />
        </div>
        <h1 className="flex-1 text-center text-[26px] leading-none text-[#404040]">
          Cocos Creator - test - db://assets/Scene/test.fire
        </h1>
      </div>

      <TopBar />

      <main className="flex min-h-0 flex-1 gap-2 px-0.5">
        <div className="flex w-[456px] shrink-0 flex-col gap-2">
          <Hierarchy />
          <Assets />
        </div>
        <Inspector />
        <div className="flex min-w-0 flex-1 flex-col gap-2">
          <SceneEditor />
          <Console />
        </div>
      </main>

      <footer className="flex h-[52px] shrink-0 items-center justify-between px-5 pt-1">
        <div className="flex items-center gap-6 text-[#707070]">
          <FaRetweet className="w-6 h-6" />
          <DatabaseIcon />
          <EyeIcon />
        </div>
        <span className="text-[#fd942b]">Cocos Creator v2.1.2</span>
      </footer>
    </div>
  </div>
);

export default App;
